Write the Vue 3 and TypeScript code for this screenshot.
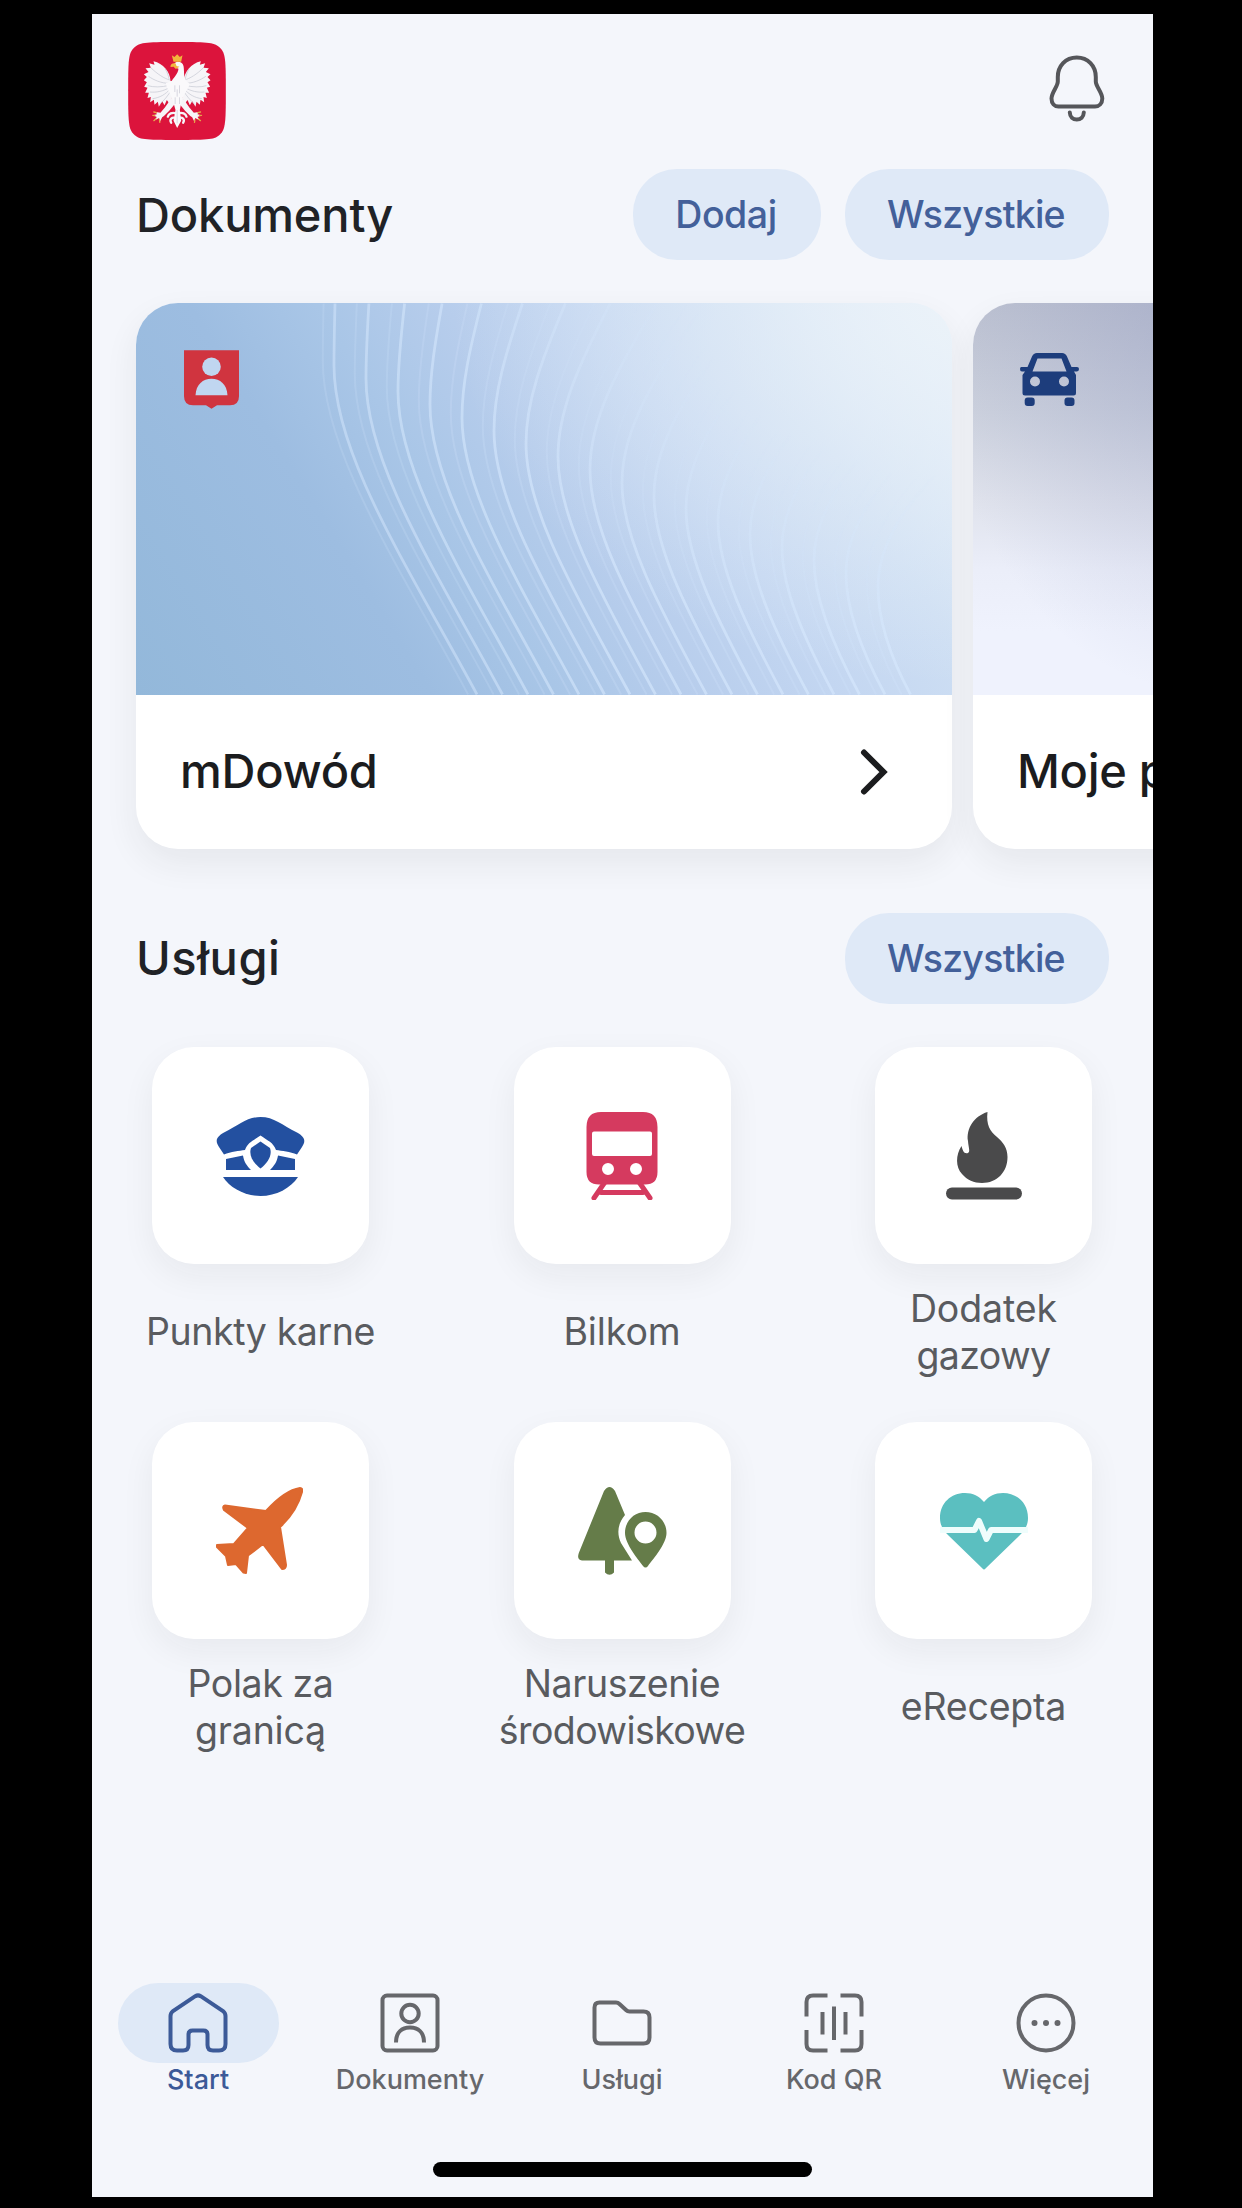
<script setup lang="ts">
interface LabelLine {
  text: string
  tracking: number
}

interface Service {
  id: string
  lines: LabelLine[]
}

interface Tab {
  id: string
  label: string
  active?: boolean
}

const services: Service[] = [
  { id: 'cap', lines: [{ text: 'Punkty karne', tracking: -0.4 }] },
  { id: 'train', lines: [{ text: 'Bilkom', tracking: -0.1 }] },
  {
    id: 'gas',
    lines: [
      { text: 'Dodatek', tracking: -0.1 },
      { text: 'gazowy', tracking: -0.6 },
    ],
  },
  {
    id: 'plane',
    lines: [
      { text: 'Polak za', tracking: -0.4 },
      { text: 'granicą', tracking: -0.2 },
    ],
  },
  {
    id: 'nature',
    lines: [
      { text: 'Naruszenie', tracking: -0.4 },
      { text: 'środowiskowe', tracking: -0.6 },
    ],
  },
  { id: 'heart', lines: [{ text: 'eRecepta', tracking: -0.2 }] },
]

const tabs: Tab[] = [
  { id: 'home', label: 'Start', active: true },
  { id: 'docs', label: 'Dokumenty' },
  { id: 'folder', label: 'Usługi' },
  { id: 'qr', label: 'Kod QR' },
  { id: 'more', label: 'Więcej' },
]

interface Wave {
  d: string
  opacity: number
  width: number
}

// Guilloche lines that bend across the card and fade to the right.
function wave(k: number, opacity: number, width: number): Wave {
  const topX = 199 + 33 * k + 0.9 * k * k
  const midX = 198 + 32 * k
  const midY = 62 + 13 * k
  const endX = 341 + 25.5 * k
  const drop = (391 - midY) * 0.39
  const d =
    `M${topX} 0C${midX + (topX - midX) * 0.4} ${midY * 0.4} ${midX} ${midY * 0.7} ${midX} ${midY}` +
    `C${midX} ${midY + drop * 0.7} ${endX - drop * 0.54} ${391 - drop} ${endX} 391`
  return { d, opacity, width }
}

const waves: Wave[] = []
for (let k = 0; k < 18; k++) {
  const fade = Math.min(0.62, 0.5 + k * 0.02)
  waves.push(wave(k, fade, 2.8))
  waves.push(wave(k - 0.35, fade * 0.35, 2))
}
</script>

<template>
  <div class="stage">
    <main class="screen">
      <header class="topbar">
        <svg class="logo" viewBox="145 126 293 294">
          <path
            d="M291 126C390 126 405 128 421 144S438 180 438 273 437 387 421 403 390 420 291 420 178 419 162 403 145 366 145 273 146 160 162 144 192 126 291 126Z"
            fill="#dc143c"
          />
          <g id="wing">
            <path
              d="M282 246L272 243C271 216 250 190 221 184L224 194 208 190 213 203 197 205 206 216 192 223 201 231 192 241 201 247 193 260 203 263 196 278 207 278 203 294 213 291 211 307 222 299 224 314 234 305 237 320 247 304 254 316 261 300 268 310 282 282Z"
              fill="#f6f5f8"
            />
            <path
              d="M270 240C254 236 232 222 213 203M268 250C244 250 222 240 206 229M268 256C246 262 220 262 204 257M270 262C250 274 230 278 210 276M272 266C256 284 240 293 218 296M276 268C264 288 252 302 240 312M256 206C262 216 266 228 268 238"
              fill="none"
              stroke="#c3c5d0"
              stroke-width="2"
            />
            <path d="M286 280C268 300 262 318 242 338L228 336 231 343 219 346 231 351 222 362 238 354 240 366 247 352C262 342 274 325 292 304Z" fill="#f6f5f8" />
            <path d="M222 336l8 2M219 346l6 1M222 362l6-5M240 367l-1-7" stroke="#e5a64a" stroke-width="4" stroke-linecap="round" />
            <path d="M290 340C276 336 266 341 264 350M288 354C276 350 268 358 274 368" fill="none" stroke="#f6f5f8" stroke-width="7" stroke-linecap="round" />
          </g>
          <use href="#wing" transform="matrix(-1 0 0 1 584 0)" />
          <path
            d="M284 190C290 182 308 184 311 198C314 212 310 230 320 244L330 252C322 274 310 284 306 300L300 330 304 362 292 384 281 362 287 330 278 298C272 282 262 270 258 250L276 242C282 232 294 222 296 206L284 202Z"
            fill="#faf9fb"
          />
          <path d="M285 256v20M299 256v24M292 268v22M286 292v20M299 292v20M292 330v40" fill="none" stroke="#cfcfd9" stroke-width="2.4" />
          <path d="M276 166L284 171 292 163 300 171 308 166 304 185H281Z" fill="#f2b53c" />
          <path d="M287 190C278 188 271 193 272 201L282 200 288 207 299 200 290 198Z" fill="#f2b53c" />
        </svg>
        <svg class="bell" viewBox="0 0 56 67" fill="none" stroke="#55565a" stroke-width="4" stroke-linecap="round">
          <path
            d="M27.800 2.500C16.500 2.500 8.800 11 8.800 22V26.500C8.800 31.500 2.500 37.500 2.500 43.500C2.500 48.500 5.500 51.500 9.500 51.500H46C50 51.500 53.300 48.500 53.300 43.500C53.300 37.500 46.800 31.500 46.800 26.500V22C46.800 11 39 2.500 27.800 2.500Z"
          />
          <path d="M20.800 57.500C21 62 24 64.500 27.800 64.500S34.600 62 34.800 57.500" />
        </svg>
      </header>

      <section class="heading">
        <h1 class="title">Dokumenty</h1>
        <div class="actions">
          <button class="pill add">Dodaj</button>
          <button class="pill all">Wszystkie</button>
        </div>
      </section>

      <section class="cards">
        <article class="card">
          <div class="cover id-cover">
            <svg class="waves" viewBox="0 0 817 391" fill="none" stroke="#d6e8fd">
              <path v-for="(w, i) in waves" :key="i" :d="w.d" :opacity="w.opacity" :stroke-width="w.width" />
            </svg>
            <svg class="shield" viewBox="0 0 55 58">
              <path d="M0 0H55V46Q55 55 46 55H33L27.500 58.500 22 55H9Q0 55 0 46Z" fill="#d0343f" />
              <circle cx="27.500" cy="16.500" r="9.300" fill="#c0d6f0" />
              <path d="M11.500 45C12 34 19 28.500 27.500 28.500S43 34 43.500 45Z" fill="#c0d6f0" />
            </svg>
          </div>
          <div class="caption">
            <span class="name">mDowód</span>
            <svg class="chevron" viewBox="0 0 28 46" fill="none" stroke="#1b1c1e" stroke-width="6">
              <path d="M4 3.500L23.500 23 4 42.500" stroke-linecap="round" />
            </svg>
          </div>
        </article>
        <article class="card">
          <div class="cover car-cover">
            <svg class="car" viewBox="0 0 59 53">
              <path
                fill="#1d3d7c"
                fill-rule="evenodd"
                d="M17 0H42Q45.500 0 47 3.500L51.500 14H57Q59 14 59 16T57 18.500H54L56 22V40Q56 42.500 53.500 42.500H5Q2.500 42.500 2.500 40V22L5 18.500H2Q0 18.500 0 16T2 14H7.500L12 3.500Q13.500 0 17 0ZM17.500 5.500L12.500 18.500H46.500L41.500 5.500ZM15 23.500A5 5 0 1 0 15 33.500 5 5 0 1 0 15 23.500ZM44 23.500A5 5 0 1 0 44 33.500 5 5 0 1 0 44 23.500Z"
              />
              <rect x="4.700" y="44.500" width="10" height="8.500" rx="3" fill="#1d3d7c" />
              <rect x="44.500" y="44.500" width="10" height="8.500" rx="3" fill="#1d3d7c" />
            </svg>
          </div>
          <div class="caption">
            <span class="name name-next">Moje pojazdy</span>
          </div>
        </article>
      </section>

      <section class="heading second">
        <h2 class="title title-services">Usługi</h2>
        <div class="actions">
          <button class="pill all">Wszystkie</button>
        </div>
      </section>

      <section class="services">
        <div v-for="s in services" :key="s.id" class="service">
          <div class="tile" :class="s.id">
            <svg v-if="s.id === 'cap'" width="89" height="79" viewBox="0 0 89 79" fill="#2350a0">
              <path
                d="M44.500 0C58 0 66 8 81 15.500C89 20 90 24 86 30L81 37.500C74 34.500 66 34 60 33C57 25 52 24 44.500 18.500C37 24 32 25 29 33C23 34 15 34.500 8 37.500L3 30C-1 24 0 20 8 15.500C23 8 31 0 44.500 0Z"
              />
              <path d="M44.500 24.500L54 31C56.500 38 52 46 44.500 51.500C37 46 32.500 38 35 31Z" />
              <path d="M10 42L27 38.500C28 45 31 49 35 53H10ZM79 42L62 38.500C61 45 58 49 54 53H79Z" />
              <path d="M7 60H82C75 71 60 79 44.500 79S14 71 7 60Z" />
            </svg>
            <svg v-else-if="s.id === 'train'" width="72" height="88" viewBox="0 0 72 88">
              <path
                fill="#d53a5f"
                fill-rule="evenodd"
                d="M15 0H57Q71.500 0 71.500 15V60Q71.500 72.500 59 72.500H13Q0.500 72.500 0.500 60V15Q0.500 0 15 0ZM8 19.500Q6 19.500 6 21.500V42Q6 44 8 44H64Q66 44 66 42V21.500Q66 19.500 64 19.500ZM22 51A6 6 0 1 0 22 63 6 6 0 1 0 22 51ZM50 51A6 6 0 1 0 50 63 6 6 0 1 0 50 51Z"
              />
              <path d="M19 70L8 86M53 70L64 86M15 80.500H57" fill="none" stroke="#d53a5f" stroke-width="5" stroke-linecap="round" />
            </svg>
            <svg v-else-if="s.id === 'gas'" width="76" height="88" viewBox="0 0 76 88" fill="#4a4a4b">
              <path
                d="M41.500 0C28 4 20 17 22 29C22.500 36 24.500 39.500 22 41C18 42.500 16.500 38 15.500 34C9.500 43 9.500 55 16 62C21 68 28 71 36 71C51 71 61.500 60 61.500 45C61.500 36 57 30 51 25C44 19 40 13 41.500 0Z"
              />
              <rect y="75.500" width="76" height="12" rx="6" />
            </svg>
            <svg v-else-if="s.id === 'plane'" width="87" height="88" viewBox="0 0 87 88" fill="#dd682f" stroke="#dd682f" stroke-width="2" stroke-linejoin="round">
              <path d="M84 1Q87 1 86 5C82 20 75 30 64 40L70 78Q70 82 66 82L47 57 32 68.500 30 86 27.500 85.500 20 77 12 78 10 69 1 60V58L18 57 32 41 8 23Q6 19 9 18.500L50 24C60 13 71 3 84 1Z" />
            </svg>
            <svg v-else-if="s.id === 'nature'" width="89" height="88" viewBox="0 0 89 88" fill="#657c49">
              <path d="M26 4Q31.500 -4 37 4L47 28C39 37 39 48 43 56L54 73.500H36V85.500Q31.500 90 27 85.500V73.500H4Q-1.500 73 0.800 66Z" />
              <path
                fill-rule="evenodd"
                d="M67.500 25C79 25 88.500 34 88.500 46C88.500 57 75 72 70 79Q67.500 82 65 79C60 72 47 57 47 46C47 34 56 25 67.500 25ZM67.500 34.500A11 11 0 1 0 67.500 56.500 11 11 0 1 0 67.500 34.500Z"
              />
            </svg>
            <svg v-else width="88" height="77" viewBox="0 0 88 77">
              <path
                d="M44 9C49 3 55 0 63 0C77 0 88 10 88 25C88 32 85 37 80 42L45.500 75.500Q44 77.500 42.500 75.500L8 42C3 37 0 32 0 25C0 10 11 0 25 0C33 0 39 3 44 9Z"
                fill="#5bbfc0"
              />
              <path d="M-2 37H34.500L39 28 46.500 46 51 37H90" fill="none" stroke="#effdfc" stroke-width="6" stroke-linejoin="round" />
            </svg>
          </div>
          <p class="label">
            <span v-for="line in s.lines" :key="line.text" :style="{ letterSpacing: line.tracking + 'px' }">{{ line.text }}</span>
          </p>
        </div>
      </section>

      <nav class="tabs">
        <a v-for="t in tabs" :key="t.id" class="tab" :class="{ active: t.active }">
          <span class="bubble">
            <svg class="tab-icon" viewBox="0 0 60 60" fill="none" stroke="currentColor" stroke-width="4">
              <path
                v-if="t.id === 'home'"
                d="M27.300 3.200Q30 1.500 32.700 3.200L55 18Q57.500 20 57.500 23V51Q57.500 57.500 51 57.500H45Q39.500 57.500 39.500 52V41.500Q39.500 37.500 35.500 37.500H24.500Q20.500 37.500 20.500 41.500V52Q20.500 57.500 15 57.500H9Q2.500 57.500 2.500 51V23Q2.500 20 5 18Z"
              />
              <template v-else-if="t.id === 'docs'">
                <rect x="2.500" y="2.500" width="55" height="55" rx="4.500" />
                <circle cx="30" cy="20.500" r="8.700" />
                <path d="M16 49.500C16 39 22 34.500 30 34.500S44 39 44 49.500" />
              </template>
              <path
                v-else-if="t.id === 'folder'"
                d="M7.500 9.500H24Q26 9.500 27.500 11L34 17Q35.500 18.500 37.500 18.500H51.500Q57.500 18.500 57.500 24.500V44.500Q57.500 50.500 51.500 50.500H8.500Q2.500 50.500 2.500 44.500V14.500Q2.500 9.500 7.500 9.500Z"
              />
              <path
                v-else-if="t.id === 'qr'"
                d="M2.500 23.500V9Q2.500 2.500 9 2.500H23.500M36.500 2.500H51Q57.500 2.500 57.500 9V23.500M57.500 37V51Q57.500 57.500 51 57.500H36.500M23.500 57.500H9Q2.500 57.500 2.500 51V37M18.500 19V41.500M30 13.500V47M41.500 19V41.500"
              />
              <template v-else>
                <circle cx="30" cy="30" r="27.500" />
                <g fill="currentColor" stroke="none">
                  <circle cx="18.500" cy="30" r="3" />
                  <circle cx="30" cy="30" r="3" />
                  <circle cx="41.500" cy="30" r="3" />
                </g>
              </template>
            </svg>
          </span>
          <span class="tab-label">{{ t.label }}</span>
        </a>
      </nav>
      <div class="home-bar"></div>
    </main>
  </div>
</template>

<style>
body {
  margin: 0;
  background: #000;
}
</style>

<style scoped>
.stage {
  box-sizing: border-box;
  width: 1242px;
  height: 2208px;
  padding: 14px 89px 11px 92px;
  background: #000;
  font-family: Inter, "Liberation Sans", sans-serif;
}
.screen {
  display: flex;
  flex-direction: column;
  width: 1061px;
  height: 2183px;
  overflow: hidden;
  background: #f4f6fb;
}
.topbar {
  display: flex;
  flex: none;
  justify-content: space-between;
  align-items: flex-start;
  padding: 28px 48.500px 0 36px;
}
.logo {
  width: 98px;
  height: 98px;
}
.bell {
  width: 56px;
  height: 67px;
  margin-top: 13px;
}
.heading {
  display: flex;
  flex: none;
  justify-content: space-between;
  align-items: center;
  height: 91px;
  margin-top: 29px;
  padding: 0 44px 0 44px;
}
.heading.second {
  margin-top: 64px;
}
.title {
  margin: 0;
  color: #202226;
  font-size: 47px;
  font-weight: 500;
  line-height: 91px;
  letter-spacing: -0.150px;
}
.title-services {
  margin-bottom: 2px;
  line-height: 88px;
  letter-spacing: 0.550px;
}
.actions {
  display: flex;
  gap: 24px;
}
.pill {
  height: 91px;
  padding: 0 2px 0 0;
  border: 0;
  border-radius: 44px;
  background: #dfe9f7;
  color: #43609a;
  font-family: inherit;
  font-size: 37.500px;
  font-weight: 500;
  line-height: 92px;
  text-align: center;
}
.add {
  width: 188px;
  letter-spacing: -0.450px;
}
.all {
  width: 264px;
  letter-spacing: -0.750px;
}
.cards {
  display: flex;
  flex: none;
  gap: 21px;
  margin-top: 43px;
  padding-left: 44px;
}
.card {
  flex: none;
  width: 816px;
  height: 546px;
  overflow: hidden;
  border-radius: 42px;
  background: #fff;
  box-shadow: 0 14px 34px rgba(40, 40, 40, 0.07);
}
.cover {
  position: relative;
  box-sizing: border-box;
  height: 392px;
  padding: 47px 0 0 48px;
}
.id-cover {
  background:
    radial-gradient(ellipse 500px 380px at 100% 0, rgba(236, 243, 249, 0.9), rgba(228, 238, 249, 0)),
    linear-gradient(58deg, #93b8da 0%, #9dbde1 28%, #a9c6e7 40%, #b7cdec 52%, #c3d6f1 66%, #cddef3 80%, #e2edf8 100%);
}
.car-cover {
  padding: 50px 0 0 47px;
  background:
    radial-gradient(ellipse 270px 390px at 230px 0, rgba(146, 154, 194, 0.42), rgba(160, 168, 200, 0)),
    linear-gradient(180deg, #bdc2d1 0%, #cdd2de 28%, #dfe2ec 50%, #ebeef9 68%, #eff2fd 84%);
}
.waves {
  position: absolute;
  inset: 0;
  width: 817px;
  height: 392px;
  mask-image: radial-gradient(ellipse 500px 340px at 100% 0, transparent 50%, #000 100%);
}
.shield {
  position: relative;
  display: block;
  width: 55px;
  height: 58.500px;
}
.car {
  display: block;
  width: 59px;
  height: 53px;
}
.caption {
  display: flex;
  justify-content: space-between;
  align-items: center;
  height: 151px;
  padding: 0 64px 0 44px;
}
.name {
  color: #1b1c1e;
  font-size: 47px;
  font-weight: 500;
  letter-spacing: -0.200px;
  white-space: nowrap;
}
.name-next {
  letter-spacing: -0.300px;
}
.chevron {
  width: 28px;
  height: 46px;
  margin-top: 2px;
}
.services {
  display: grid;
  flex: none;
  grid-template-columns: repeat(3, 260px);
  justify-content: space-between;
  row-gap: 42px;
  margin-top: 43px;
  padding: 0 39.500px 0 38.500px;
}
.service {
  display: flex;
  flex-direction: column;
  align-items: center;
}
.tile {
  display: flex;
  align-items: center;
  justify-content: center;
  width: 217px;
  height: 217px;
  border-radius: 42px;
  background: #fff;
  box-shadow: 0 12px 34px rgba(40, 40, 40, 0.06);
}
.cap {
  box-sizing: border-box;
  padding-top: 2px;
}
.plane {
  box-sizing: border-box;
  padding-right: 2px;
}
.heart {
  box-sizing: border-box;
  padding-top: 2px;
}
.label {
  display: flex;
  flex-direction: column;
  justify-content: center;
  align-items: center;
  height: 93px;
  margin: 22px 0 1px;
  color: #595b5f;
  font-size: 37.500px;
  line-height: 46.500px;
  white-space: nowrap;
}
.tabs {
  display: flex;
  flex: none;
  height: 179px;
  margin-top: auto;
  margin-right: 1px;
}
.tab {
  display: flex;
  flex: 1;
  flex-direction: column;
  align-items: center;
  color: #66676b;
}
.tab.active {
  color: #3c5a98;
}
.bubble {
  display: flex;
  align-items: center;
  justify-content: center;
  width: 161px;
  height: 80px;
  border-radius: 40px;
}
.active .bubble {
  background: #dfe9f7;
}
.tab-icon {
  width: 60px;
  height: 60px;
}
.tab-label {
  font-size: 27px;
  font-weight: 500;
  line-height: 33px;
}
.home-bar {
  flex: none;
  width: 379px;
  height: 15px;
  margin: 0 auto 20px;
  border-radius: 8px;
  background: #000;
}
</style>
